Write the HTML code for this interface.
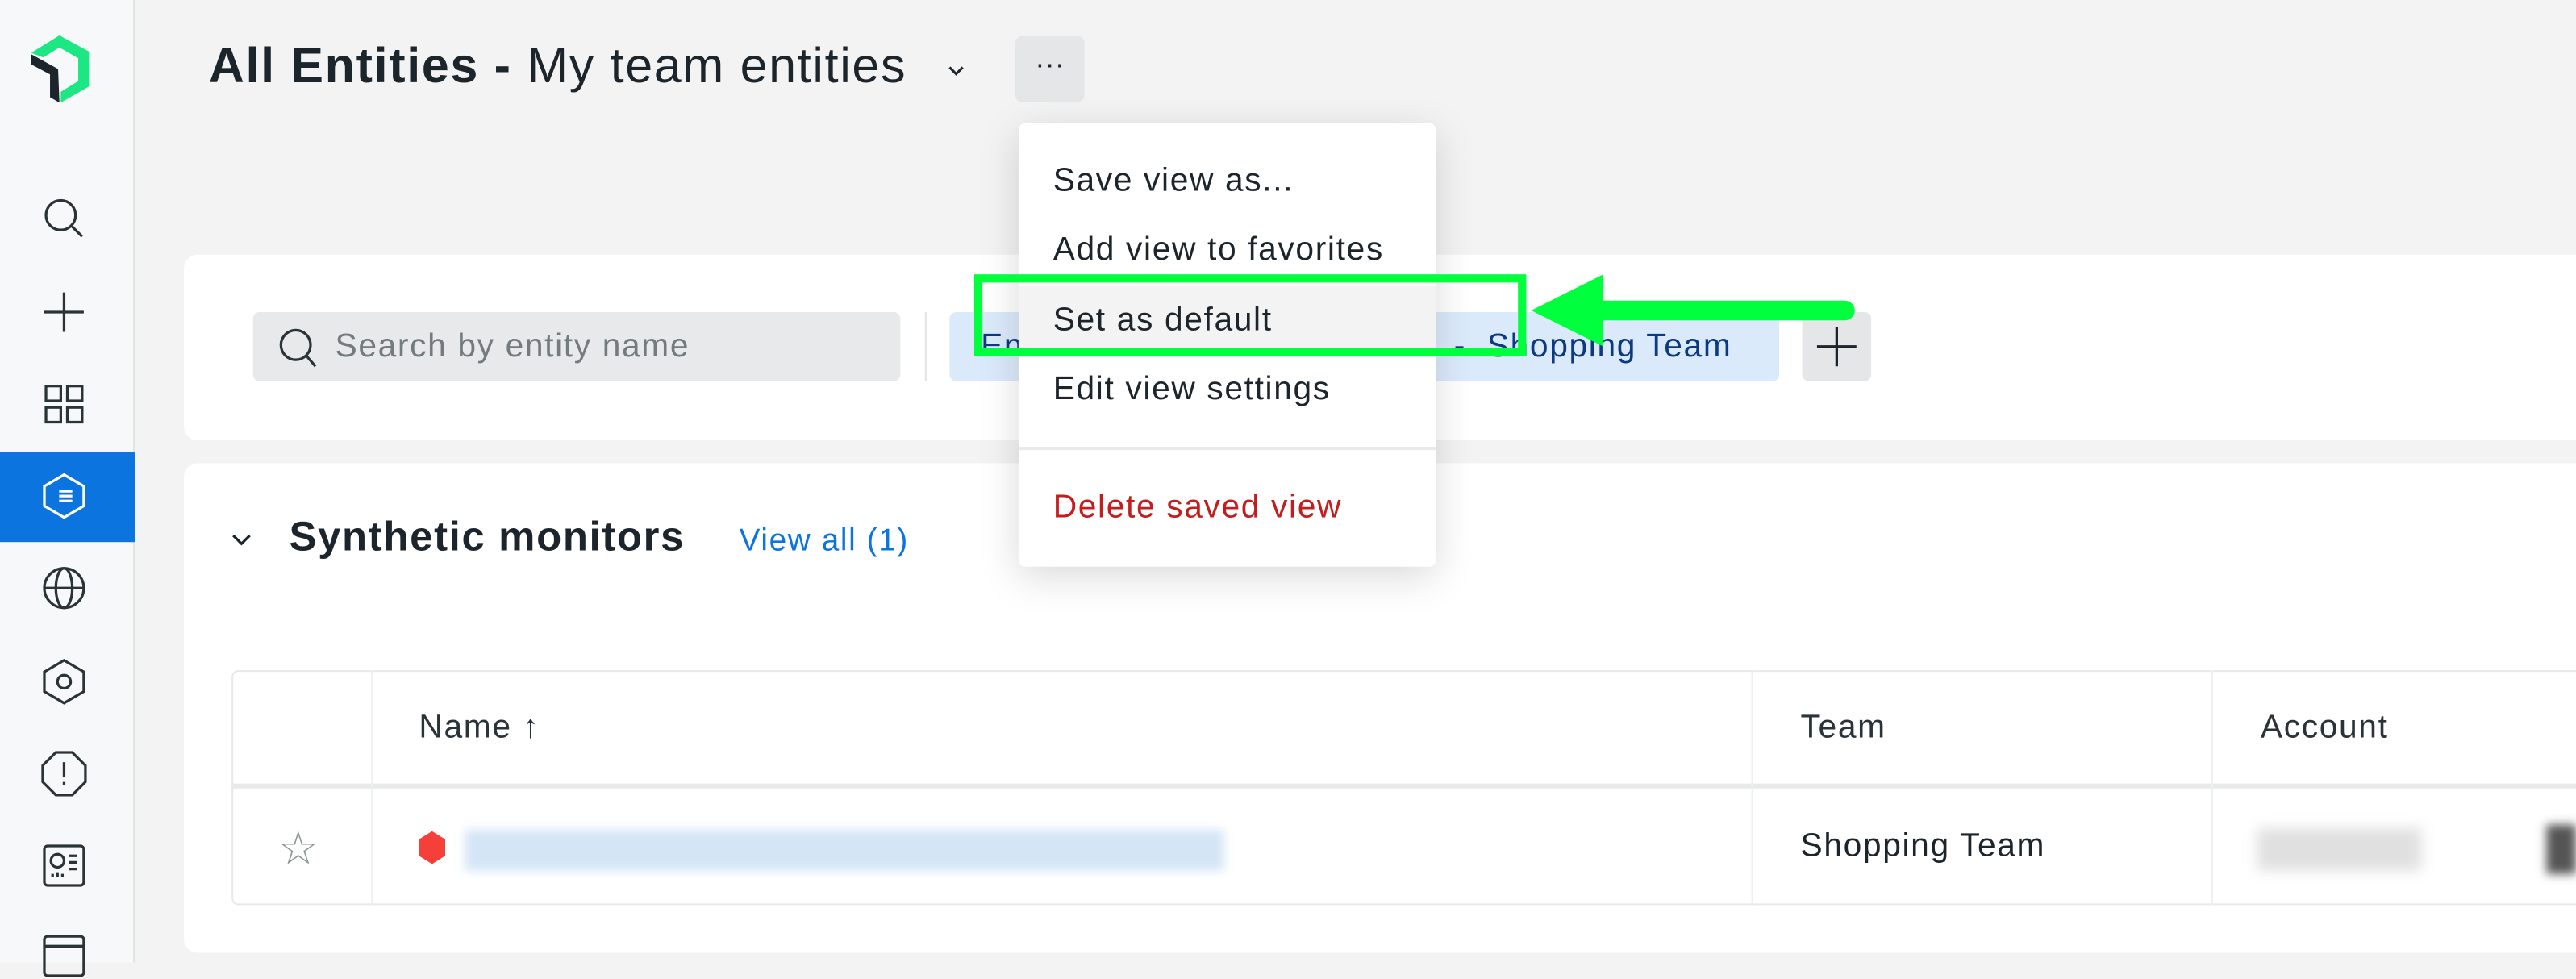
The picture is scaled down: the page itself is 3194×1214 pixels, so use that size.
<!DOCTYPE html>
<html><head><meta charset="utf-8"><style>
*{box-sizing:border-box;margin:0;padding:0}
html,body{width:3194px;height:1192px;overflow:hidden;background:#f3f3f3;font-family:"Liberation Sans",sans-serif}
#w{position:absolute;left:0;top:0;width:1568px;height:586px;transform:scale(2.037);transform-origin:0 0;background:#f3f3f3;letter-spacing:0.05em}
.a{position:absolute}
.side{left:0;top:0;width:82px;height:586px;background:#f7f8f9;border-right:1px solid #e3e4e4}
.ic{position:absolute;left:25px;width:28px;height:28px}
.card{background:#fff;border-radius:8px}
.t{white-space:nowrap}
.mi{position:absolute;left:21px;font-size:20px;color:#1d252c;white-space:nowrap}
</style></head><body><div id="w">
<div class="a side">
 <svg class="a" style="left:9.8px;top:14.7px" width="54" height="54" viewBox="0 0 330 330"><path d="M55 105 L160 40 L270 100 L270 230 L165 290 L165 250 L230 210 L230 125 L160 85 L100 122 Z" fill="#1ce783"/><path d="M55 110 L155 165 L160 290 L125 270 L125 185 L55 148 Z" fill="#1d252c"/></svg>
 <svg class="ic" style="top:119px" viewBox="0 0 28 28"><circle cx="12" cy="12" r="9" fill="none" stroke="#2a3434" stroke-width="1.6"/><path d="M18.5 18.5 L25 25" stroke="#2a3434" stroke-width="1.6"/></svg>
 <svg class="ic" style="top:176px" viewBox="0 0 28 28"><path d="M14 2V26M2 14H26" stroke="#2a3434" stroke-width="1.6"/></svg>
 <svg class="ic" style="top:232px" viewBox="0 0 28 28"><g fill="none" stroke="#2a3434" stroke-width="1.6"><rect x="3" y="3" width="9" height="9"/><rect x="16" y="3" width="9" height="9"/><rect x="3" y="16" width="9" height="9"/><rect x="16" y="16" width="9" height="9"/></g></svg>
 <div class="a" style="left:0;top:275px;width:82px;height:55px;background:#0c74df"></div>
 <svg class="ic" style="top:288px" viewBox="0 0 28 28"><g fill="none" stroke="#fff" stroke-width="1.6"><path d="M14 1 L26 8 L26 20 L14 27 L2 20 L2 8Z"/><path d="M11 11H19M11 14H19M11 17H19"/></g></svg>
 <svg class="ic" style="top:344px" viewBox="0 0 28 28"><g fill="none" stroke="#2a3434" stroke-width="1.6"><circle cx="14" cy="14" r="12"/><ellipse cx="14" cy="14" rx="5" ry="12"/><path d="M2 14H26"/></g></svg>
 <svg class="ic" style="top:401px" viewBox="0 0 28 28"><g fill="none" stroke="#2a3434" stroke-width="1.6"><path d="M14 1 L26 8 L26 20 L14 27 L2 20 L2 8Z"/><circle cx="14" cy="14" r="4"/></g></svg>
 <svg class="ic" style="top:457px" viewBox="0 0 28 28"><g fill="none" stroke="#2a3434" stroke-width="1.6"><path d="M9 1H19L27 9V19L19 27H9L1 19V9Z"/><path d="M14 7V16M14 19V21"/></g></svg>
 <svg class="ic" style="top:513px" viewBox="0 0 28 28"><g fill="none" stroke="#2a3434" stroke-width="1.6"><rect x="2" y="2" width="24" height="24" rx="2"/><circle cx="10" cy="11" r="4"/><path d="M17 8H22M17 12H22M17 16H22M7 21V19M10 21V18M13 21V19"/></g></svg>
 <svg class="ic" style="top:568px" viewBox="0 0 28 28"><g fill="none" stroke="#2a3434" stroke-width="1.6"><rect x="2" y="2" width="24" height="24" rx="2"/><path d="M2 8H26"/></g></svg>
</div>
<div class="a t" style="left:127px;top:24px;font-size:30px;color:#1d252c"><b>All Entities -</b> My team entities</div>
<svg class="a" style="left:576px;top:38px" width="12" height="10"><path d="M2 3L6 7L10 3" fill="none" stroke="#1d252c" stroke-width="1.5"/></svg>
<div class="a" style="left:618px;top:22px;width:42px;height:40px;background:#e4e6e7;border-radius:4px;text-align:center;font-size:18px;line-height:34px;color:#1d252c;letter-spacing:0">···</div>

<div class="a card" style="left:112px;top:155px;width:1470px;height:113px"></div>
<div class="a" style="left:154px;top:190px;width:394px;height:42px;background:#e7e9ea;border-radius:4px"></div>
<svg class="a" style="left:168px;top:198px" width="28" height="28"><circle cx="12" cy="12" r="9" fill="none" stroke="#2a3434" stroke-width="1.6"/><path d="M18 18L24 25" stroke="#2a3434" stroke-width="1.6"/></svg>
<div class="a t" style="left:204px;top:200px;font-size:20px;color:#737b7f">Search by entity name</div>
<div class="a" style="left:563px;top:190px;width:1px;height:42px;background:#e3e4e4"></div>
<div class="a" style="left:578px;top:190px;width:505px;height:42px;background:#dbeafb;border-radius:4px"></div>
<div class="a t" style="left:597px;top:200px;font-size:20px;color:#0b3a80">En</div>
<div class="a t" style="left:885px;top:200px;font-size:20px;color:#0b3a80">-&nbsp;&nbsp;Shopping Team</div>
<div class="a" style="left:1097px;top:190px;width:42px;height:42px;background:#e4e6e7;border-radius:4px"></div>
<svg class="a" style="left:1105px;top:198px" width="26" height="26"><path d="M13 1V25M1 13H25" stroke="#1d252c" stroke-width="1.6"/></svg>

<div class="a card" style="left:112px;top:282px;width:1470px;height:298px"></div>
<svg class="a" style="left:140px;top:324px" width="14" height="10"><path d="M2 2L7 7L12 2" fill="none" stroke="#1d252c" stroke-width="1.6"/></svg>
<div class="a t" style="left:176px;top:313px;font-size:25px;font-weight:bold;color:#1d252c">Synthetic monitors</div>
<div class="a t" style="left:450px;top:319px;font-size:19px;color:#0c74df">View all (1)</div>
<div class="a" style="left:141px;top:408px;width:1440px;height:143px;border:1px solid #e7e9ea;border-radius:4px"></div>
<div class="a" style="left:141px;top:477px;width:1430px;height:3px;background:#e7e9ea"></div>
<div class="a" style="left:226px;top:408px;width:1px;height:143px;background:#eef0f0"></div>
<div class="a" style="left:1066px;top:408px;width:1px;height:143px;background:#eef0f0"></div>
<div class="a" style="left:1346px;top:408px;width:1px;height:143px;background:#eef0f0"></div>
<div class="a t" style="left:255px;top:432px;font-size:20px;color:#293338">Name ↑</div>
<div class="a t" style="left:1096px;top:432px;font-size:20px;color:#293338">Team</div>
<div class="a t" style="left:1376px;top:432px;font-size:20px;color:#293338">Account</div>
<div class="a t" style="left:169px;top:500px;font-size:28px;color:#8e9494">☆</div>
<svg class="a" style="left:254px;top:505px" width="18" height="22"><path d="M9 1L17 6V16L9 21L1 16V6Z" fill="#f5403a"/></svg>
<div class="a" style="left:283px;top:505px;width:462px;height:25px;background:#d4e5f6;filter:blur(3px)"></div>
<div class="a t" style="left:1096px;top:504px;font-size:20px;color:#1d252c">Shopping Team</div>
<div class="a" style="left:1374px;top:504px;width:100px;height:26px;background:#e0e0e0;filter:blur(4px)"></div>
<div class="a" style="left:1550px;top:502px;width:18px;height:30px;background:#555;filter:blur(3px)"></div>

<div class="a" style="left:620px;top:75px;width:254px;height:270px;background:#fff;border-radius:4px;box-shadow:0 6px 24px rgba(0,0,0,.15)">
 <div class="mi" style="top:24px">Save view as...</div>
 <div class="mi" style="top:66px">Add view to favorites</div>
 <div class="a" style="left:0;top:99px;width:254px;height:42px;background:#f3f3f3"></div>
 <div class="mi" style="top:109px">Set as default</div>
 <div class="mi" style="top:151px">Edit view settings</div>
 <div class="a" style="left:0;top:197px;width:254px;height:2px;background:#e7e9ea"></div>
 <div class="mi" style="top:223px;color:#c31d1d">Delete saved view</div>
</div>
<div class="a" style="left:593px;top:167px;width:336px;height:50px;border:5px solid #00ff3c"></div>
<svg class="a" style="left:928px;top:164px" width="210" height="52"><path d="M4 25L48 3V47Z" fill="#00ff3c"/><path d="M44 25H195" stroke="#00ff3c" stroke-width="12" stroke-linecap="round"/></svg>
</div></body></html>
